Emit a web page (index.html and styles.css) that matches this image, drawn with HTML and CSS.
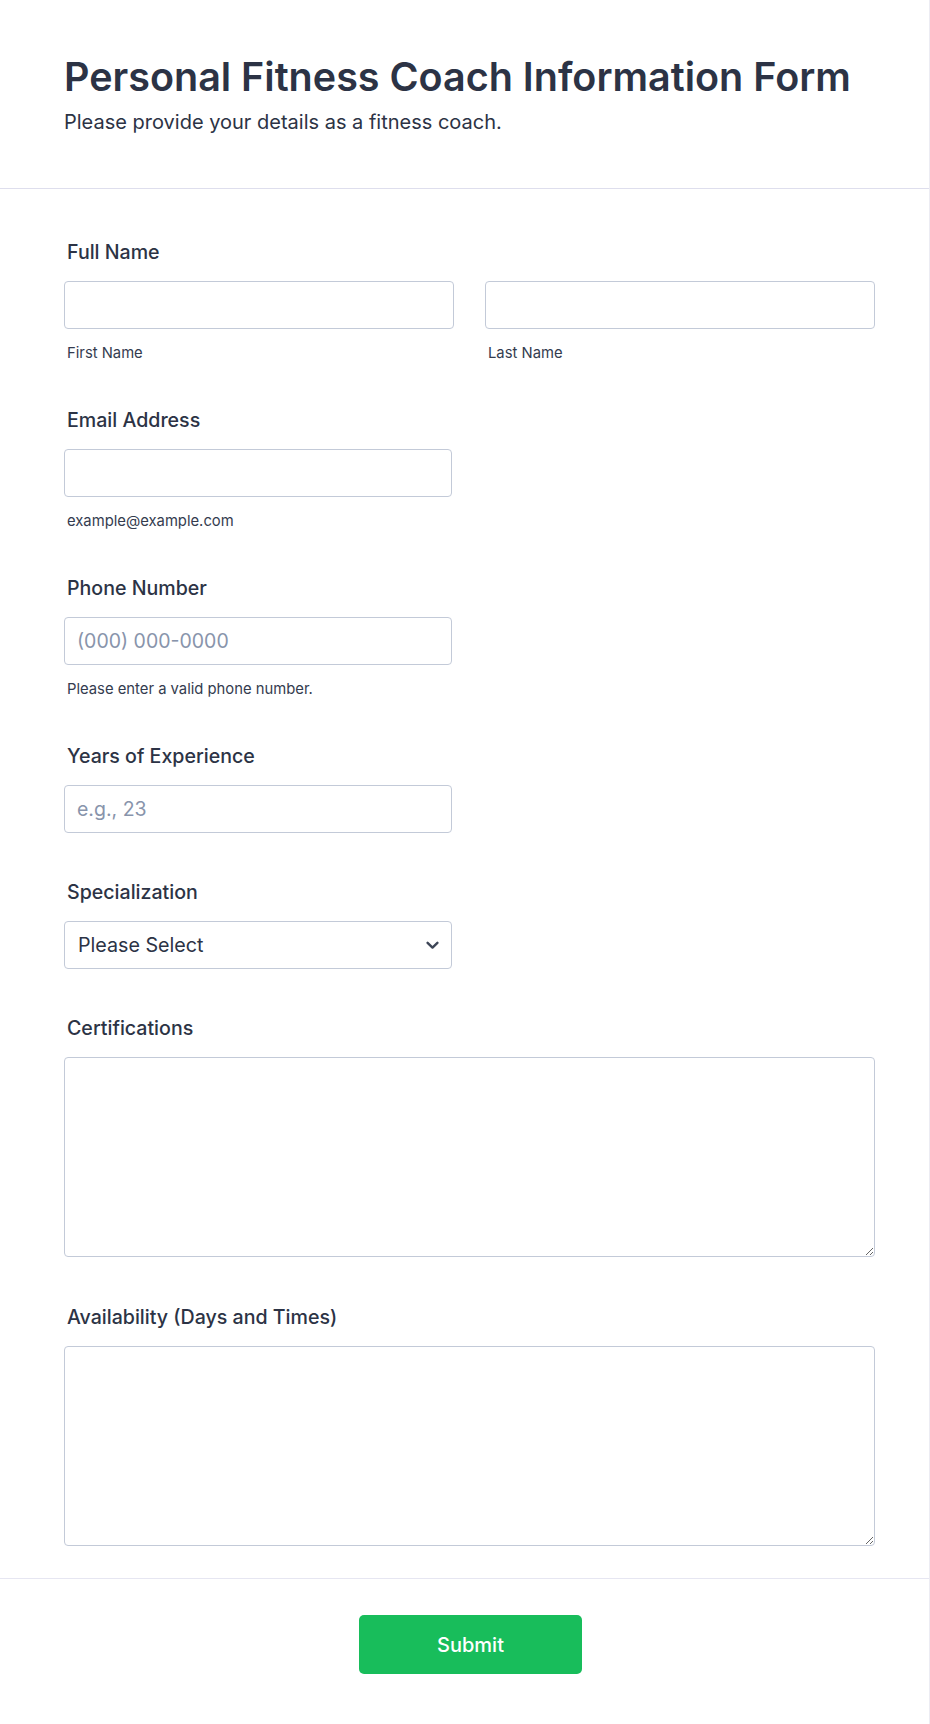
FILE: index.html
```html
<!DOCTYPE html>
<html lang="en">
<head>
<meta charset="utf-8">
<title>Personal Fitness Coach Information Form</title>
<link rel="stylesheet" href="styles.css">
</head>
<body>
<div class="form">
  <header class="form-header">
    <h1 class="title">Personal Fitness Coach Information Form</h1>
    <p class="subtitle">Please provide your details as a fitness coach.</p>
  </header>
  <main class="form-body">
    <div class="field">
      <label class="label">Full Name</label>
      <div class="name-row">
        <div class="name-col">
          <input class="input" type="text">
          <span class="sublabel">First Name</span>
        </div>
        <div class="name-col">
          <input class="input" type="text">
          <span class="sublabel">Last Name</span>
        </div>
      </div>
    </div>
    <div class="field">
      <label class="label">Email Address</label>
      <input class="input" type="email">
      <span class="sublabel">example@example.com</span>
    </div>
    <div class="field">
      <label class="label">Phone Number</label>
      <input class="input" type="tel" placeholder="(000) 000-0000">
      <span class="sublabel">Please enter a valid phone number.</span>
    </div>
    <div class="field">
      <label class="label">Years of Experience</label>
      <input class="input" type="text" placeholder="e.g., 23">
    </div>
    <div class="field">
      <label class="label">Specialization</label>
      <div class="select-wrap">
        <select class="input select">
          <option>Please Select</option>
        </select>
        <svg class="chevron" width="13" height="9" viewBox="0 0 13 9" aria-hidden="true">
          <path d="M1.6 1.8 L6.5 6.6 L11.4 1.8" fill="none" stroke="#3e4657" stroke-width="2.4" stroke-linecap="round" stroke-linejoin="round"/>
        </svg>
      </div>
    </div>
    <div class="field">
      <label class="label">Certifications</label>
      <textarea class="input textarea"></textarea>
    </div>
    <div class="field field-last">
      <label class="label">Availability (Days and Times)</label>
      <textarea class="input textarea"></textarea>
    </div>
  </main>
  <footer class="form-footer">
    <button class="submit" type="button">Submit</button>
  </footer>
</div>
</body>
</html>
```
FILE: styles.css
```css
html, body {
  margin: 0;
  padding: 0;
  background: #ffffff;
}

body {
  font-family: Inter, "Noto Sans", "Liberation Sans", sans-serif;
  color: #2c3345;
}

.form {
  box-sizing: border-box;
  min-height: 1724px;
  border-right: 1px solid #ececf3;
}

.form-header {
  padding: 53px 54px 52px 64px;
  border-bottom: 1px solid #dedeed;
}

.title {
  margin: 0;
  font-size: 39.5px;
  line-height: 48px;
  font-weight: 600;
  color: #2c3345;
}

.subtitle {
  margin: 8px 0 0 0;
  font-size: 20px;
  line-height: 27px;
  font-weight: 400;
  color: #2c3345;
}

.form-body {
  padding: 49px 54px 0 64px;
}

.field {
  padding-bottom: 45px;
}

.field-last {
  padding-bottom: 31px;
}

.label {
  display: block;
  padding: 1px 0 0 3px;
  margin-bottom: 15px;
  font-size: 19.6px;
  line-height: 27px;
  font-weight: 500;
  color: #2c3345;
}

.input {
  display: block;
  box-sizing: border-box;
  width: 388px;
  height: 48px;
  margin: 0;
  padding: 0 12px;
  border: 1px solid #c3cad8;
  border-radius: 4px;
  background: #ffffff;
  font-family: inherit;
  font-size: 19.5px;
  color: #2c3345;
  outline: none;
}

.input::placeholder {
  color: #8894ab;
}

.sublabel {
  display: block;
  margin-top: 16px;
  padding-left: 3px;
  font-size: 14.8px;
  line-height: 16px;
  color: #343c4f;
}

.name-row {
  display: flex;
  gap: 31px;
}

.name-col {
  flex: 1;
}

.name-col .input {
  width: 100%;
}

.select-wrap {
  position: relative;
  width: 388px;
}

.select {
  width: 100%;
  padding-left: 13px;
  font-size: 19.7px;
  -webkit-appearance: none;
  appearance: none;
  cursor: pointer;
}

.chevron {
  position: absolute;
  right: 13px;
  top: 20px;
  pointer-events: none;
}

.textarea {
  width: 100%;
  height: 200px;
  margin: 1px 0 1px 0;
  padding: 12px;
  resize: both;
}

.form-footer {
  display: flex;
  justify-content: center;
  padding: 36px 54px 38px 66px;
  border-top: 1px solid #e6e6f2;
}

.submit {
  width: 223px;
  height: 59px;
  border: none;
  border-radius: 5px;
  background: #18bd5b;
  color: #ffffff;
  font-family: inherit;
  font-size: 20px;
  font-weight: 500;
  cursor: pointer;
}
```
